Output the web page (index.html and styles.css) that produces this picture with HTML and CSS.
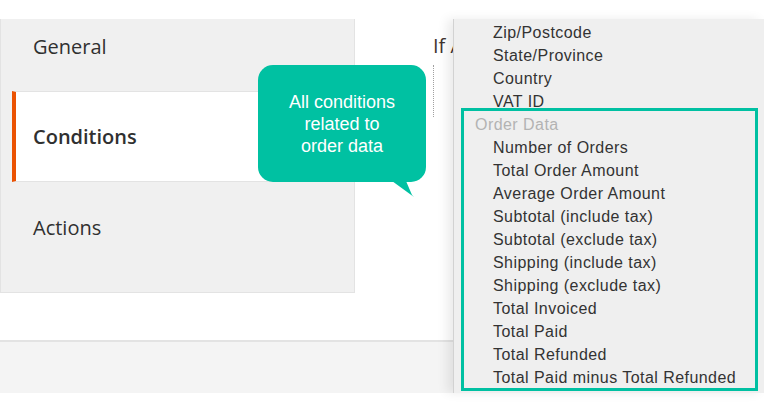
FILE: index.html
```html
<!DOCTYPE html>
<html lang="en">

<head>
    <meta charset="UTF-8">
    <meta name="viewport" content="width=device-width, initial-scale=1.0">
    <title>Conditions</title>
    <link rel="stylesheet" href="styles.css">
</head>

<body>
    <div id="page">
        <div id="main">
            <div id="tabs">
                <div class="tab tab-first">General</div>
                <div class="tab tab-active">Conditions</div>
                <div class="tab">Actions</div>
            </div>
            <div id="rules">
                <div class="rules-title">If ALL of these conditions are TRUE:</div>
                <div class="rules-tree"></div>
            </div>
        </div>
        <div id="footer"></div>

        <div id="hint">
            All conditions<br>related to<br>order data
            <svg class="hint-tail" width="24" height="16" viewBox="0 0 24 16">
                <polygon points="0,0 14,0 20,14 22,16" fill="#00c1a2" />
            </svg>
        </div>

        <div id="menu">
            <div class="opt">Zip/Postcode</div>
            <div class="opt">State/Province</div>
            <div class="opt">Country</div>
            <div class="opt">VAT ID</div>
            <div class="opt-group">Order Data</div>
            <div class="opt">Number of Orders</div>
            <div class="opt">Total Order Amount</div>
            <div class="opt">Average Order Amount</div>
            <div class="opt">Subtotal (include tax)</div>
            <div class="opt">Subtotal (exclude tax)</div>
            <div class="opt">Shipping (include tax)</div>
            <div class="opt">Shipping (exclude tax)</div>
            <div class="opt">Total Invoiced</div>
            <div class="opt">Total Paid</div>
            <div class="opt">Total Refunded</div>
            <div class="opt">Total Paid minus Total Refunded</div>
        </div>
        <div id="highlight"></div>
    </div>
</body>

</html>
```

FILE: styles.css
```css
* {
    box-sizing: border-box;
}

body {
    margin: 0;
    background-color: #ffffff;
    font-family: "Open Sans", "Liberation Sans", sans-serif;
    overflow: hidden;
}

#page {
    position: relative;
    width: 764px;
    height: 415px;
}

#main {
    display: flex;
    padding-top: 19px;
    height: 340px;
}

#tabs {
    width: 355px;
    height: 274px;
    background-color: #f0f0f0;
    border: 1px solid #e3e3e3;
    border-top: none;
}

.tab {
    height: 90px;
    display: flex;
    align-items: center;
    padding-left: 32px;
    font-size: 20px;
    color: #303030;
}

.tab-first {
    height: 72px;
    align-items: flex-start;
    padding-top: 14px;
}

.tab-active {
    height: 91px;
    margin-left: 11px;
    padding-left: 17px;
    background-color: #ffffff;
    border-left: 4px solid #eb5202;
    border-top: 1px solid #e3e3e3;
    border-bottom: 1px solid #e3e3e3;
    font-weight: 600;
}

/* the dropdown covers the rest of this column */
#rules {
    width: 98px;
    padding-left: 78px;
    padding-top: 13px;
    white-space: nowrap;
    overflow: hidden;
}

.rules-title {
    font-size: 20px;
    color: #41362f;
    line-height: 28px;
}

.rules-tree {
    margin-top: 5px;
    height: 52px;
    border-left: 1px dotted #a0a0a0;
}

#footer {
    height: 53px;
    background-color: #f4f4f4;
    border-top: 2px solid #e3e3e3;
}

#hint {
    position: absolute;
    left: 258px;
    top: 65px;
    width: 168px;
    height: 117px;
    padding-top: 26px;
    border-radius: 15px;
    background-color: #00c1a2;
    color: #ffffff;
    font-family: "Liberation Sans", Arial, sans-serif;
    font-size: 18px;
    line-height: 22px;
    text-align: center;
}

.hint-tail {
    position: absolute;
    left: 134px;
    top: 116px;
}

#menu {
    position: absolute;
    left: 453px;
    top: 19px;
    width: 311px;
    height: 374px;
    padding-top: 2px;
    background-color: #efefef;
    border-left: 1px solid #d2d2d2;
    box-shadow: -6px 0 10px rgba(0, 0, 0, 0.08);
    font-family: "Liberation Sans", Arial, sans-serif;
    font-size: 16px;
    letter-spacing: 0.45px;
    line-height: 23px;
    color: #333333;
}

.opt {
    padding-left: 39px;
}

.opt-group {
    padding-left: 21px;
    color: #b3b3b3;
}

#highlight {
    position: absolute;
    left: 461px;
    top: 108px;
    width: 297px;
    height: 283px;
    border: 3px solid #00c0a2;
}
```
